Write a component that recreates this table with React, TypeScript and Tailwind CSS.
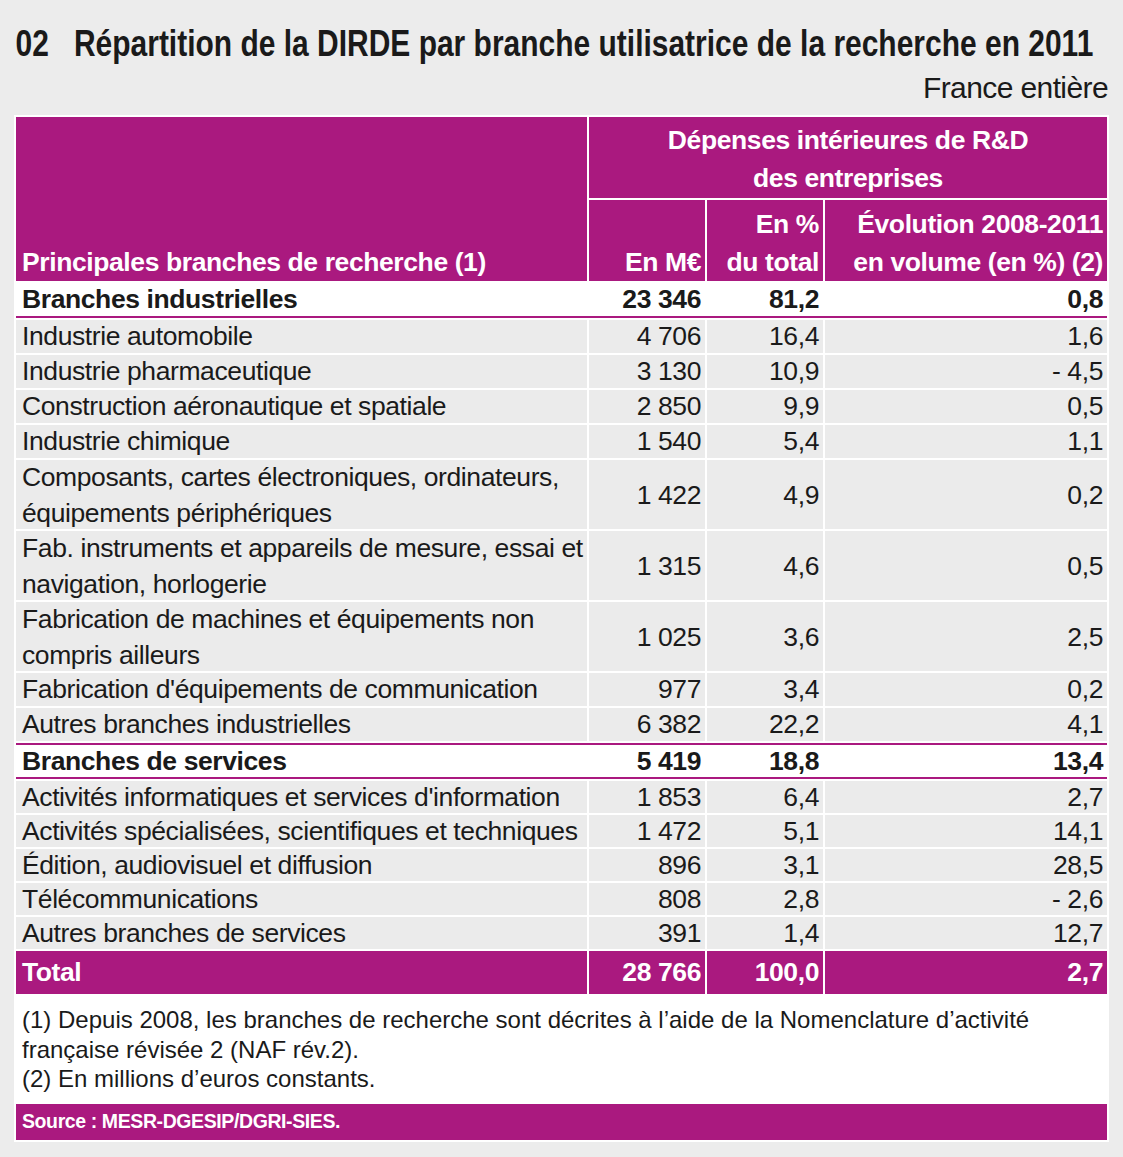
import React from "react";

type Row =
  | { kind: "group"; label: string; values: string[]; top?: boolean }
  | { kind: "item"; lines: string[]; values: string[]; small?: boolean };

const rows: Row[] = [
  { kind: "group", label: "Branches industrielles", values: ["23 346", "81,2", "0,8"] },
  { kind: "item", lines: ["Industrie automobile"], values: ["4 706", "16,4", "1,6"] },
  { kind: "item", lines: ["Industrie pharmaceutique"], values: ["3 130", "10,9", "- 4,5"] },
  { kind: "item", lines: ["Construction aéronautique et spatiale"], values: ["2 850", "9,9", "0,5"] },
  { kind: "item", lines: ["Industrie chimique"], values: ["1 540", "5,4", "1,1"] },
  {
    kind: "item",
    lines: ["Composants, cartes électroniques, ordinateurs,", "équipements périphériques"],
    values: ["1 422", "4,9", "0,2"],
  },
  {
    kind: "item",
    lines: ["Fab. instruments et appareils de mesure, essai et", "navigation, horlogerie"],
    values: ["1 315", "4,6", "0,5"],
  },
  {
    kind: "item",
    lines: ["Fabrication de machines et équipements non", "compris ailleurs"],
    values: ["1 025", "3,6", "2,5"],
  },
  { kind: "item", lines: ["Fabrication d'équipements de communication"], values: ["977", "3,4", "0,2"] },
  { kind: "item", lines: ["Autres branches industrielles"], values: ["6 382", "22,2", "4,1"] },
  { kind: "group", label: "Branches de services", values: ["5 419", "18,8", "13,4"], top: true },
  { kind: "item", lines: ["Activités informatiques et services d'information"], values: ["1 853", "6,4", "2,7"], small: true },
  { kind: "item", lines: ["Activités spécialisées, scientifiques et techniques"], values: ["1 472", "5,1", "14,1"], small: true },
  { kind: "item", lines: ["Édition, audiovisuel et diffusion"], values: ["896", "3,1", "28,5"], small: true },
  { kind: "item", lines: ["Télécommunications"], values: ["808", "2,8", "- 2,6"], small: true },
  { kind: "item", lines: ["Autres branches de services"], values: ["391", "1,4", "12,7"], small: true },
];

const cols = "grid grid-cols-[571px_116px_116px_282px] gap-x-[2px]";

function GroupRow({ label, values, top }: { label: string; values: string[]; top?: boolean }) {
  return (
    <div
      className={`${cols} grid-rows-1 bg-white font-bold border-b-2 border-[#aa197f] ${
        top ? "border-t-2 h-[36px]" : "h-[35px]"
      }`}
    >
      <div className="pl-[6px] flex items-center">{label}</div>
      {values.map((v, i) => (
        <div key={i} className="flex items-center justify-end pr-[4px]">
          {v}
        </div>
      ))}
    </div>
  );
}

function ItemRow({ lines, values, small }: { lines: string[]; values: string[]; small?: boolean }) {
  const tall = lines.length > 1;
  const h = tall ? "h-[69px] leading-[36px]" : small ? "h-[32px] leading-[32px]" : "h-[33px] leading-[33px]";
  return (
    <div className={`${cols} grid-rows-1 ${h}`}>
      <div className="min-h-0 bg-[#ebebeb] pl-[6px] flex flex-col justify-center whitespace-nowrap">
        {lines.map((l) => (
          <span key={l}>{l}</span>
        ))}
      </div>
      {values.map((v, i) => (
        <div key={i} className="min-h-0 bg-[#ebebeb] flex items-center justify-end pr-[4px]">
          {v}
        </div>
      ))}
    </div>
  );
}

export default function App() {
  return (
    <div className="min-h-screen w-[1123px] bg-[#ececec] font-['Liberation_Sans',Arial,sans-serif] text-[#1a1a1a] text-[26.5px] tracking-[-0.4px] leading-none pt-[24px] px-[14px] pb-[14px]">
      <div className="overflow-hidden">
        <h1 className="font-bold text-[37px] leading-[40px] tracking-normal pl-[2px] whitespace-pre origin-left scale-x-[0.81]">
          02{"   "}Répartition de la DIRDE par branche utilisatrice de la recherche en 2011
        </h1>
      </div>
      <div className="text-right text-[30px] leading-[32px] tracking-[-0.6px] mt-[8px] pr-[1px]">
        France entière
      </div>

      <div className="mt-[11px] bg-white p-[2px] flex flex-col gap-y-[2px]">
        {/* en-tête */}
        <div className={`${cols} grid-rows-[81px_81px] gap-y-[2px] text-white font-bold leading-[38px]`}>
          <div className="row-span-2 bg-[#aa197f] flex items-end pl-[6px]">
            Principales branches de recherche (1)
          </div>
          <div className="col-span-3 bg-[#aa197f] flex flex-col items-center justify-center pt-[2px]">
            <span>Dépenses intérieures de R&amp;D</span>
            <span>des entreprises</span>
          </div>
          <div className="bg-[#aa197f] flex flex-col items-end justify-end pr-[4px]">
            <span>En M€</span>
          </div>
          <div className="bg-[#aa197f] flex flex-col items-end justify-end pr-[4px]">
            <span>En %</span>
            <span>du total</span>
          </div>
          <div className="bg-[#aa197f] flex flex-col items-end justify-end pr-[4px]">
            <span>Évolution 2008-2011</span>
            <span>en volume (en %) (2)</span>
          </div>
        </div>

        {rows.map((r, i) =>
          r.kind === "group" ? (
            <GroupRow key={i} label={r.label} values={r.values} top={r.top} />
          ) : (
            <ItemRow key={i} lines={r.lines} values={r.values} small={r.small} />
          )
        )}

        {/* total */}
        <div className={`${cols} grid-rows-1 h-[43px] text-white font-bold`}>
          <div className="bg-[#aa197f] pl-[6px] flex items-center">Total</div>
          <div className="bg-[#aa197f] flex items-center justify-end pr-[4px]">28 766</div>
          <div className="bg-[#aa197f] flex items-center justify-end pr-[4px]">100,0</div>
          <div className="bg-[#aa197f] flex items-center justify-end pr-[4px]">2,7</div>
        </div>

        <div className="h-[106px] pl-[6px] pt-[9px] text-[24px] leading-[29.5px] tracking-normal">
          <p>(1) Depuis 2008, les branches de recherche sont décrites à l’aide de la Nomenclature d’activité</p>
          <p>française révisée 2 (NAF rév.2).</p>
          <p>(2) En millions d’euros constants.</p>
        </div>

        <div className="h-[36px] bg-[#aa197f] text-white font-bold text-[19.5px] tracking-[-0.4px] pl-[6px] flex items-center">
          Source : MESR-DGESIP/DGRI-SIES.
        </div>
      </div>
    </div>
  );
}
